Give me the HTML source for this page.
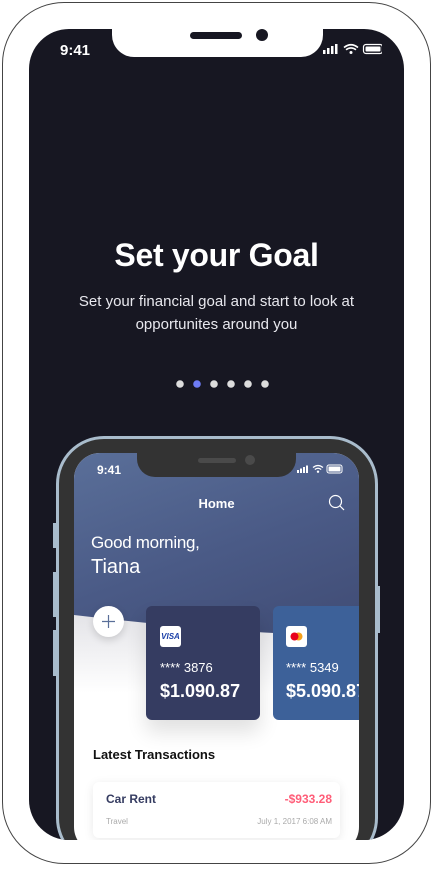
<!DOCTYPE html>
<html><head><style>
*{margin:0;padding:0;box-sizing:border-box}
body{width:433px;height:869px;background:#fff;position:relative;overflow:hidden;font-family:"Liberation Sans",sans-serif}
.outer{position:absolute;left:2px;top:2px;width:429px;height:862px;border:1.5px solid #444;border-radius:62px;background:#fff}
.screen{position:absolute;left:29px;top:29px;width:375px;height:811px;background:#171722;border-radius:40px;overflow:hidden}
.notch{position:absolute;left:83px;top:-2px;width:211px;height:30px;background:#fff;border-radius:0 0 22px 22px}
.abs{position:absolute}
</style></head><body>
<div class="outer"></div>
<div class="screen">
  <div class="notch"></div>
  <div class="abs" style="left:161px;top:3px;width:52px;height:7px;border-radius:4px;background:#171722"></div>
  <div class="abs" style="left:227px;top:0px;width:12px;height:12px;border-radius:6px;background:#171722"></div>
  <div class="abs" style="left:31px;top:13px;color:#fff;font-size:15px;font-weight:bold">9:41</div>
  <svg class="abs" style="left:293px;top:14px" width="60" height="14">
    <rect x="1" y="7" width="2.5" height="4" fill="#fff"/><rect x="5" y="5" width="2.5" height="6" fill="#fff"/><rect x="9" y="3" width="2.5" height="8" fill="#fff"/><rect x="13" y="1" width="2.5" height="10" fill="#fff"/>
    <path d="M22 4.5 Q29 -1 36 4.5 M24 6.8 Q29 3 34 6.8" stroke="#fff" stroke-width="1.6" fill="none"/><circle cx="29" cy="9.5" r="1.5" fill="#fff"/>
    <rect x="42.5" y="1.5" width="19" height="9" rx="2.5" stroke="#fff" stroke-width="1.2" fill="none" transform="translate(-1 0)"/><rect x="43.5" y="3.5" width="15" height="5" rx="1" fill="#fff"/>
  </svg>
  <div class="abs" style="left:0;width:375px;top:208px;text-align:center;color:#fff;font-size:32px;font-weight:bold;letter-spacing:-0.3px">Set your Goal</div>
  <div class="abs" style="left:0;width:375px;top:261px;text-align:center;color:#e8e8ee;font-size:15px;line-height:23px">Set your financial goal and start to look at<br>opportunites around you</div>
  <svg class="abs" style="left:0;top:349px" width="375" height="12">
    <circle cx="151" cy="6" r="3.8" fill="#ddd"/><circle cx="168" cy="6" r="3.8" fill="#6e7cf5"/><circle cx="185" cy="6" r="3.8" fill="#ddd"/><circle cx="202" cy="6" r="3.8" fill="#ddd"/><circle cx="219" cy="6" r="3.8" fill="#ddd"/><circle cx="236" cy="6" r="3.8" fill="#ddd"/>
  </svg>
  <!-- inner phone -->
  <div class="abs" style="left:24px;top:494px;width:4px;height:25px;background:#a9bccc"></div>
  <div class="abs" style="left:24px;top:543px;width:4px;height:45px;background:#a9bccc"></div>
  <div class="abs" style="left:24px;top:601px;width:4px;height:46px;background:#a9bccc"></div>
  <div class="abs" style="left:347px;top:557px;width:4px;height:47px;background:#a9bccc"></div>
  <div class="abs" style="left:27px;top:407px;width:322px;height:430px;border:3.5px solid #a9bccc;border-radius:48px;background:#333"></div>
  <div class="abs" style="left:45px;top:424px;width:285px;height:400px;border-radius:26px;overflow:hidden;background:#fff">
    <div class="abs" style="left:0;top:0;width:285px;height:200px;background:linear-gradient(160deg,#5a6f99 0%,#4a5a86 50%,#3f4a72 100%)"></div>
    <svg class="abs" style="left:0;top:130px" width="285" height="110"><defs><linearGradient id="g" x1="0" y1="0" x2="0" y2="1"><stop offset="0" stop-color="#e4e4e8"/><stop offset="1" stop-color="#fff"/></linearGradient></defs><path d="M0 32 Q120 46 200 50 Q250 51 285 46 L285 110 L0 110Z" fill="url(#g)"/></svg>
    <div class="abs" style="left:63px;top:-2px;width:159px;height:26px;background:#333;border-radius:0 0 18px 18px"></div>
    <div class="abs" style="left:124px;top:5px;width:38px;height:5px;border-radius:3px;background:#4a4a4a"></div>
    <div class="abs" style="left:171px;top:2px;width:10px;height:10px;border-radius:5px;background:#4a4a4a"></div>
    <div class="abs" style="left:23px;top:10px;color:#fff;font-size:12px;font-weight:bold">9:41</div>
    <svg class="abs" style="left:222px;top:11px" width="55" height="12"><rect x="1" y="6" width="2" height="3" fill="#fff"/><rect x="4" y="4.5" width="2" height="4.5" fill="#fff"/><rect x="7" y="3" width="2" height="6" fill="#fff"/><rect x="10" y="1.5" width="2" height="7.5" fill="#fff"/><path d="M17 3.5 Q22 -0.5 27 3.5 M18.8 5.5 Q22 3 25.2 5.5" stroke="#fff" stroke-width="1.3" fill="none"/><circle cx="22" cy="7.7" r="1.2" fill="#fff"/><rect x="31" y="1" width="15" height="8" rx="2" stroke="#fff" fill="none"/><rect x="32.5" y="2.5" width="12" height="5" fill="#fff"/></svg>
    <div class="abs" style="left:0;width:285px;top:43px;text-align:center;color:#fff;font-size:13px;font-weight:bold">Home</div>
    <svg class="abs" style="left:254px;top:41px" width="18" height="18"><circle cx="7.5" cy="7.5" r="6" stroke="#fff" stroke-width="1.2" fill="none"/><path d="M12 12 L16 16" stroke="#fff" stroke-width="1.2"/></svg>
    <div class="abs" style="left:17px;top:80px;color:#fff;font-size:17px;letter-spacing:-0.3px">Good morning,</div>
    <div class="abs" style="left:17px;top:103px;color:#fff;font-size:20px">Tiana</div>
    <div class="abs" style="left:19px;top:153px;width:31px;height:31px;border-radius:50%;background:#fff;box-shadow:0 3px 8px rgba(0,0,0,.15)"></div>
    <svg class="abs" style="left:27px;top:161px" width="15" height="15"><path d="M7.5 1V14M1 7.5H14" stroke="#5a6f99" stroke-width="1.2"/></svg>
    <div class="abs" style="left:72px;top:153px;width:114px;height:114px;border-radius:6px;background:#353c61;box-shadow:0 12px 20px rgba(0,0,0,.12)"></div>
    <div class="abs" style="left:86px;top:173px;width:21px;height:21px;border-radius:3px;background:#fff;color:#1a3fa8;font-size:8px;font-weight:bold;font-style:italic;text-align:center;line-height:21px">VISA</div>
    <div class="abs" style="left:86px;top:207px;color:#fff;font-size:13px">**** 3876</div>
    <div class="abs" style="left:86px;top:228px;color:#fff;font-size:18px;font-weight:bold">$1.090.87</div>
    <div class="abs" style="left:199px;top:153px;width:114px;height:114px;border-radius:6px;background:#3d6199"></div>
    <div class="abs" style="left:212px;top:173px;width:21px;height:21px;border-radius:3px;background:#fff"></div>
    <svg class="abs" style="left:212px;top:173px" width="21" height="21"><circle cx="12.5" cy="10.5" r="4" fill="#f5a01a"/><circle cx="8.5" cy="10.5" r="4" fill="#e8001c"/></svg>
    <div class="abs" style="left:212px;top:207px;color:#fff;font-size:13px">**** 5349</div>
    <div class="abs" style="left:212px;top:228px;color:#fff;font-size:18px;font-weight:bold;white-space:nowrap">$5.090.87</div>
    <div class="abs" style="left:19px;top:294px;color:#111;font-size:13px;font-weight:bold">Latest Transactions</div>
    <div class="abs" style="left:19px;top:329px;width:247px;height:56px;border-radius:6px;background:#fff;box-shadow:0 2px 10px rgba(0,0,0,.09)"></div>
    <div class="abs" style="left:32px;top:339px;color:#353c61;font-size:12px;font-weight:bold">Car Rent</div>
    <div class="abs" style="left:150px;width:108px;text-align:right;top:339px;color:#ff5d78;font-size:12px;font-weight:bold">-$933.28</div>
    <div class="abs" style="left:32px;top:364px;color:#aaa;font-size:8px">Travel</div>
    <div class="abs" style="left:150px;width:108px;text-align:right;top:364px;color:#aaa;font-size:8px">July 1, 2017 6:08 AM</div>
  </div>
</div>
</body></html>
